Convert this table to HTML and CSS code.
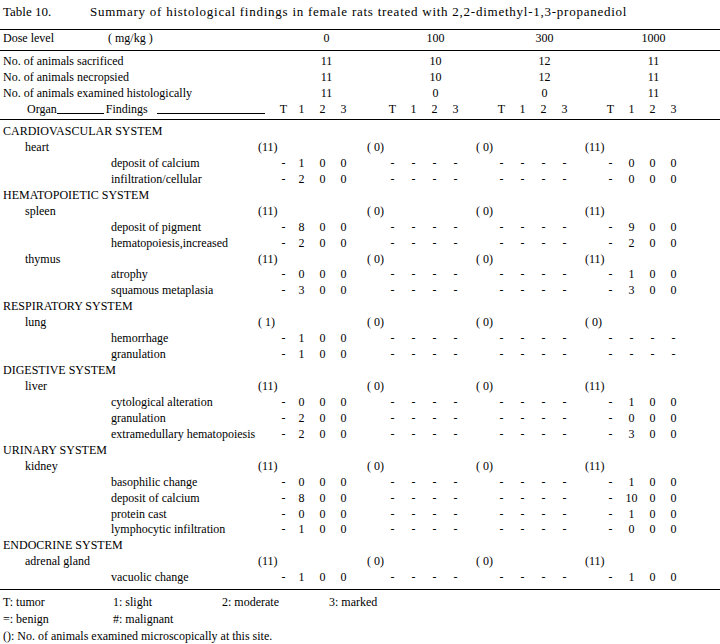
FILE: index.html
```html
<!DOCTYPE html>
<html>
<head>
<meta charset="utf-8">
<link rel="stylesheet" href="styles.css">
</head>
<body>
<div class="page">
  <div class="title"><span class="tno">Table 10.</span><span class="ttext">Summary of histological findings in female rats treated with 2,2-dimethyl-1,3-propanediol</span></div>

  <div class="dose rule">
    <div class="row">
      <div class="label"><span class="dl">Dose level</span>( mg/kg )</div>
      <div class="grp"><span class="cnt">0</span></div>
      <div class="grp"><span class="cnt">100</span></div>
      <div class="grp"><span class="cnt">300</span></div>
      <div class="grp"><span class="cnt">1000</span></div>
    </div>
  </div>

  <div class="counts rule">
    <div class="row">
      <div class="label">No. of animals sacrificed</div>
      <div class="grp"><span class="cnt">11</span></div>
      <div class="grp"><span class="cnt">10</span></div>
      <div class="grp"><span class="cnt">12</span></div>
      <div class="grp"><span class="cnt">11</span></div>
    </div>
    <div class="row">
      <div class="label">No. of animals necropsied</div>
      <div class="grp"><span class="cnt">11</span></div>
      <div class="grp"><span class="cnt">10</span></div>
      <div class="grp"><span class="cnt">12</span></div>
      <div class="grp"><span class="cnt">11</span></div>
    </div>
    <div class="row">
      <div class="label">No. of animals examined histologically</div>
      <div class="grp"><span class="cnt">11</span></div>
      <div class="grp"><span class="cnt">0</span></div>
      <div class="grp"><span class="cnt">0</span></div>
      <div class="grp"><span class="cnt">11</span></div>
    </div>
    <div class="row">
      <div class="label organ-head">Organ<span class="ul ul1"></span><span class="fh">Findings</span><span class="ul ul2"></span></div>
      <div class="grp"><span class="c">T</span><span class="c">1</span><span class="c">2</span><span class="c">3</span></div>
      <div class="grp"><span class="c">T</span><span class="c">1</span><span class="c">2</span><span class="c">3</span></div>
      <div class="grp"><span class="c">T</span><span class="c">1</span><span class="c">2</span><span class="c">3</span></div>
      <div class="grp"><span class="c">T</span><span class="c">1</span><span class="c">2</span><span class="c">3</span></div>
    </div>
  </div>

  <div class="data rule">
    <div class="row sys">CARDIOVASCULAR SYSTEM</div>
    <div class="row"><div class="label organ">heart</div><div class="grp n">(11)</div><div class="grp n">( 0)</div><div class="grp n">( 0)</div><div class="grp n">(11)</div></div>
    <div class="row"><div class="label find">deposit of calcium</div><div class="grp"><span class="c">-</span><span class="c">1</span><span class="c">0</span><span class="c">0</span></div><div class="grp"><span class="c">-</span><span class="c">-</span><span class="c">-</span><span class="c">-</span></div><div class="grp"><span class="c">-</span><span class="c">-</span><span class="c">-</span><span class="c">-</span></div><div class="grp"><span class="c">-</span><span class="c">0</span><span class="c">0</span><span class="c">0</span></div></div>
    <div class="row"><div class="label find">infiltration/cellular</div><div class="grp"><span class="c">-</span><span class="c">2</span><span class="c">0</span><span class="c">0</span></div><div class="grp"><span class="c">-</span><span class="c">-</span><span class="c">-</span><span class="c">-</span></div><div class="grp"><span class="c">-</span><span class="c">-</span><span class="c">-</span><span class="c">-</span></div><div class="grp"><span class="c">-</span><span class="c">0</span><span class="c">0</span><span class="c">0</span></div></div>

    <div class="row sys">HEMATOPOIETIC SYSTEM</div>
    <div class="row"><div class="label organ">spleen</div><div class="grp n">(11)</div><div class="grp n">( 0)</div><div class="grp n">( 0)</div><div class="grp n">(11)</div></div>
    <div class="row"><div class="label find">deposit of pigment</div><div class="grp"><span class="c">-</span><span class="c">8</span><span class="c">0</span><span class="c">0</span></div><div class="grp"><span class="c">-</span><span class="c">-</span><span class="c">-</span><span class="c">-</span></div><div class="grp"><span class="c">-</span><span class="c">-</span><span class="c">-</span><span class="c">-</span></div><div class="grp"><span class="c">-</span><span class="c">9</span><span class="c">0</span><span class="c">0</span></div></div>
    <div class="row"><div class="label find">hematopoiesis,increased</div><div class="grp"><span class="c">-</span><span class="c">2</span><span class="c">0</span><span class="c">0</span></div><div class="grp"><span class="c">-</span><span class="c">-</span><span class="c">-</span><span class="c">-</span></div><div class="grp"><span class="c">-</span><span class="c">-</span><span class="c">-</span><span class="c">-</span></div><div class="grp"><span class="c">-</span><span class="c">2</span><span class="c">0</span><span class="c">0</span></div></div>
    <div class="row"><div class="label organ">thymus</div><div class="grp n">(11)</div><div class="grp n">( 0)</div><div class="grp n">( 0)</div><div class="grp n">(11)</div></div>
    <div class="row"><div class="label find">atrophy</div><div class="grp"><span class="c">-</span><span class="c">0</span><span class="c">0</span><span class="c">0</span></div><div class="grp"><span class="c">-</span><span class="c">-</span><span class="c">-</span><span class="c">-</span></div><div class="grp"><span class="c">-</span><span class="c">-</span><span class="c">-</span><span class="c">-</span></div><div class="grp"><span class="c">-</span><span class="c">1</span><span class="c">0</span><span class="c">0</span></div></div>
    <div class="row"><div class="label find">squamous metaplasia</div><div class="grp"><span class="c">-</span><span class="c">3</span><span class="c">0</span><span class="c">0</span></div><div class="grp"><span class="c">-</span><span class="c">-</span><span class="c">-</span><span class="c">-</span></div><div class="grp"><span class="c">-</span><span class="c">-</span><span class="c">-</span><span class="c">-</span></div><div class="grp"><span class="c">-</span><span class="c">3</span><span class="c">0</span><span class="c">0</span></div></div>

    <div class="row sys">RESPIRATORY SYSTEM</div>
    <div class="row"><div class="label organ">lung</div><div class="grp n">( 1)</div><div class="grp n">( 0)</div><div class="grp n">( 0)</div><div class="grp n">( 0)</div></div>
    <div class="row"><div class="label find">hemorrhage</div><div class="grp"><span class="c">-</span><span class="c">1</span><span class="c">0</span><span class="c">0</span></div><div class="grp"><span class="c">-</span><span class="c">-</span><span class="c">-</span><span class="c">-</span></div><div class="grp"><span class="c">-</span><span class="c">-</span><span class="c">-</span><span class="c">-</span></div><div class="grp"><span class="c">-</span><span class="c">-</span><span class="c">-</span><span class="c">-</span></div></div>
    <div class="row"><div class="label find">granulation</div><div class="grp"><span class="c">-</span><span class="c">1</span><span class="c">0</span><span class="c">0</span></div><div class="grp"><span class="c">-</span><span class="c">-</span><span class="c">-</span><span class="c">-</span></div><div class="grp"><span class="c">-</span><span class="c">-</span><span class="c">-</span><span class="c">-</span></div><div class="grp"><span class="c">-</span><span class="c">-</span><span class="c">-</span><span class="c">-</span></div></div>

    <div class="row sys">DIGESTIVE SYSTEM</div>
    <div class="row"><div class="label organ">liver</div><div class="grp n">(11)</div><div class="grp n">( 0)</div><div class="grp n">( 0)</div><div class="grp n">(11)</div></div>
    <div class="row"><div class="label find">cytological alteration</div><div class="grp"><span class="c">-</span><span class="c">0</span><span class="c">0</span><span class="c">0</span></div><div class="grp"><span class="c">-</span><span class="c">-</span><span class="c">-</span><span class="c">-</span></div><div class="grp"><span class="c">-</span><span class="c">-</span><span class="c">-</span><span class="c">-</span></div><div class="grp"><span class="c">-</span><span class="c">1</span><span class="c">0</span><span class="c">0</span></div></div>
    <div class="row"><div class="label find">granulation</div><div class="grp"><span class="c">-</span><span class="c">2</span><span class="c">0</span><span class="c">0</span></div><div class="grp"><span class="c">-</span><span class="c">-</span><span class="c">-</span><span class="c">-</span></div><div class="grp"><span class="c">-</span><span class="c">-</span><span class="c">-</span><span class="c">-</span></div><div class="grp"><span class="c">-</span><span class="c">0</span><span class="c">0</span><span class="c">0</span></div></div>
    <div class="row"><div class="label find">extramedullary hematopoiesis</div><div class="grp"><span class="c">-</span><span class="c">2</span><span class="c">0</span><span class="c">0</span></div><div class="grp"><span class="c">-</span><span class="c">-</span><span class="c">-</span><span class="c">-</span></div><div class="grp"><span class="c">-</span><span class="c">-</span><span class="c">-</span><span class="c">-</span></div><div class="grp"><span class="c">-</span><span class="c">3</span><span class="c">0</span><span class="c">0</span></div></div>

    <div class="row sys">URINARY SYSTEM</div>
    <div class="row"><div class="label organ">kidney</div><div class="grp n">(11)</div><div class="grp n">( 0)</div><div class="grp n">( 0)</div><div class="grp n">(11)</div></div>
    <div class="row"><div class="label find">basophilic change</div><div class="grp"><span class="c">-</span><span class="c">0</span><span class="c">0</span><span class="c">0</span></div><div class="grp"><span class="c">-</span><span class="c">-</span><span class="c">-</span><span class="c">-</span></div><div class="grp"><span class="c">-</span><span class="c">-</span><span class="c">-</span><span class="c">-</span></div><div class="grp"><span class="c">-</span><span class="c">1</span><span class="c">0</span><span class="c">0</span></div></div>
    <div class="row"><div class="label find">deposit of calcium</div><div class="grp"><span class="c">-</span><span class="c">8</span><span class="c">0</span><span class="c">0</span></div><div class="grp"><span class="c">-</span><span class="c">-</span><span class="c">-</span><span class="c">-</span></div><div class="grp"><span class="c">-</span><span class="c">-</span><span class="c">-</span><span class="c">-</span></div><div class="grp"><span class="c">-</span><span class="c">10</span><span class="c">0</span><span class="c">0</span></div></div>
    <div class="row"><div class="label find">protein cast</div><div class="grp"><span class="c">-</span><span class="c">0</span><span class="c">0</span><span class="c">0</span></div><div class="grp"><span class="c">-</span><span class="c">-</span><span class="c">-</span><span class="c">-</span></div><div class="grp"><span class="c">-</span><span class="c">-</span><span class="c">-</span><span class="c">-</span></div><div class="grp"><span class="c">-</span><span class="c">1</span><span class="c">0</span><span class="c">0</span></div></div>
    <div class="row"><div class="label find">lymphocytic infiltration</div><div class="grp"><span class="c">-</span><span class="c">1</span><span class="c">0</span><span class="c">0</span></div><div class="grp"><span class="c">-</span><span class="c">-</span><span class="c">-</span><span class="c">-</span></div><div class="grp"><span class="c">-</span><span class="c">-</span><span class="c">-</span><span class="c">-</span></div><div class="grp"><span class="c">-</span><span class="c">0</span><span class="c">0</span><span class="c">0</span></div></div>

    <div class="row sys">ENDOCRINE SYSTEM</div>
    <div class="row"><div class="label organ">adrenal gland</div><div class="grp n">(11)</div><div class="grp n">( 0)</div><div class="grp n">( 0)</div><div class="grp n">(11)</div></div>
    <div class="row"><div class="label find">vacuolic change</div><div class="grp"><span class="c">-</span><span class="c">1</span><span class="c">0</span><span class="c">0</span></div><div class="grp"><span class="c">-</span><span class="c">-</span><span class="c">-</span><span class="c">-</span></div><div class="grp"><span class="c">-</span><span class="c">-</span><span class="c">-</span><span class="c">-</span></div><div class="grp"><span class="c">-</span><span class="c">1</span><span class="c">0</span><span class="c">0</span></div></div>
  </div>

  <div class="notes rule">
    <div class="nrow"><span class="k1">T: tumor</span><span class="k2">1: slight</span><span class="k3">2: moderate</span><span>3: marked</span></div>
    <div class="nrow"><span class="k1">=: benign</span><span class="k2">#: malignant</span></div>
    <div class="nrow">(): No. of animals examined microscopically at this site.</div>
  </div>
</div>
</body>
</html>
```

FILE: styles.css
```css
html, body {
  margin: 0;
  padding: 0;
  background: #fff;
}

body {
  width: 720px;
  height: 644px;
  overflow: hidden;
  font-family: "Liberation Serif", "Times New Roman", serif;
  font-size: 12px;
  color: #000;
}

.page {
  display: flex;
  flex-direction: column;
}

.title {
  font-size: 13px;
  line-height: 16px;
  padding: 4px 0 0 3px;
  height: 25px;
  white-space: nowrap;
}

.tno {
  display: inline-block;
  width: 87px;
}

.ttext {
  letter-spacing: 0.75px;
}

.rule {
  border-top: 1px solid #000;
}

.row {
  display: flex;
  line-height: 16px;
  white-space: nowrap;
  padding-left: 3px;
}

.label {
  width: 255px;
  flex: none;
  overflow: visible;
}

.dl {
  display: inline-block;
  width: 105px;
}

.grp {
  width: 109px;
  flex: none;
  display: flex;
  padding-left: 15px;
  box-sizing: border-box;
}

.grp.n {
  padding-left: 0;
}

.cnt {
  margin-left: 22px;
  width: 63px;
  text-align: center;
}

.c {
  width: 21px;
  text-align: center;
  flex: none;
}

/* first dose group is set slightly tighter */
.row > .grp:nth-child(2) {
  padding-left: 18px;
}

.row > .grp:nth-child(2) .c:first-child {
  width: 15px;
}

.row > .grp:nth-child(2) .cnt {
  margin-left: 19px;
}

.row > .grp.n:nth-child(2) {
  padding-left: 0;
}

.dose {
  height: 20px;
}

.counts {
  padding: 2px 0 2px;
}

.organ-head {
  padding-left: 24px;
  box-sizing: border-box;
}

.ul {
  display: inline-block;
  border-bottom: 1px solid #000;
  height: 12px;
  vertical-align: baseline;
  margin-bottom: -1px;
}

.ul1 {
  width: 47px;
  margin-right: 2px;
}

.fh {
  display: inline-block;
  width: 51px;
}

.ul2 {
  width: 108px;
}

.data {
  padding: 4px 0 3px;
}

.data .row {
  line-height: 15.93px;
}

.organ {
  padding-left: 22px;
  box-sizing: border-box;
}

.find {
  padding-left: 108px;
  box-sizing: border-box;
}

.notes {
  padding: 4px 0 0 3px;
}

.nrow {
  display: flex;
  line-height: 17px;
  white-space: nowrap;
}

.k1 {
  width: 110px;
}

.k2 {
  width: 109px;
}

.k3 {
  width: 107px;
}
```
